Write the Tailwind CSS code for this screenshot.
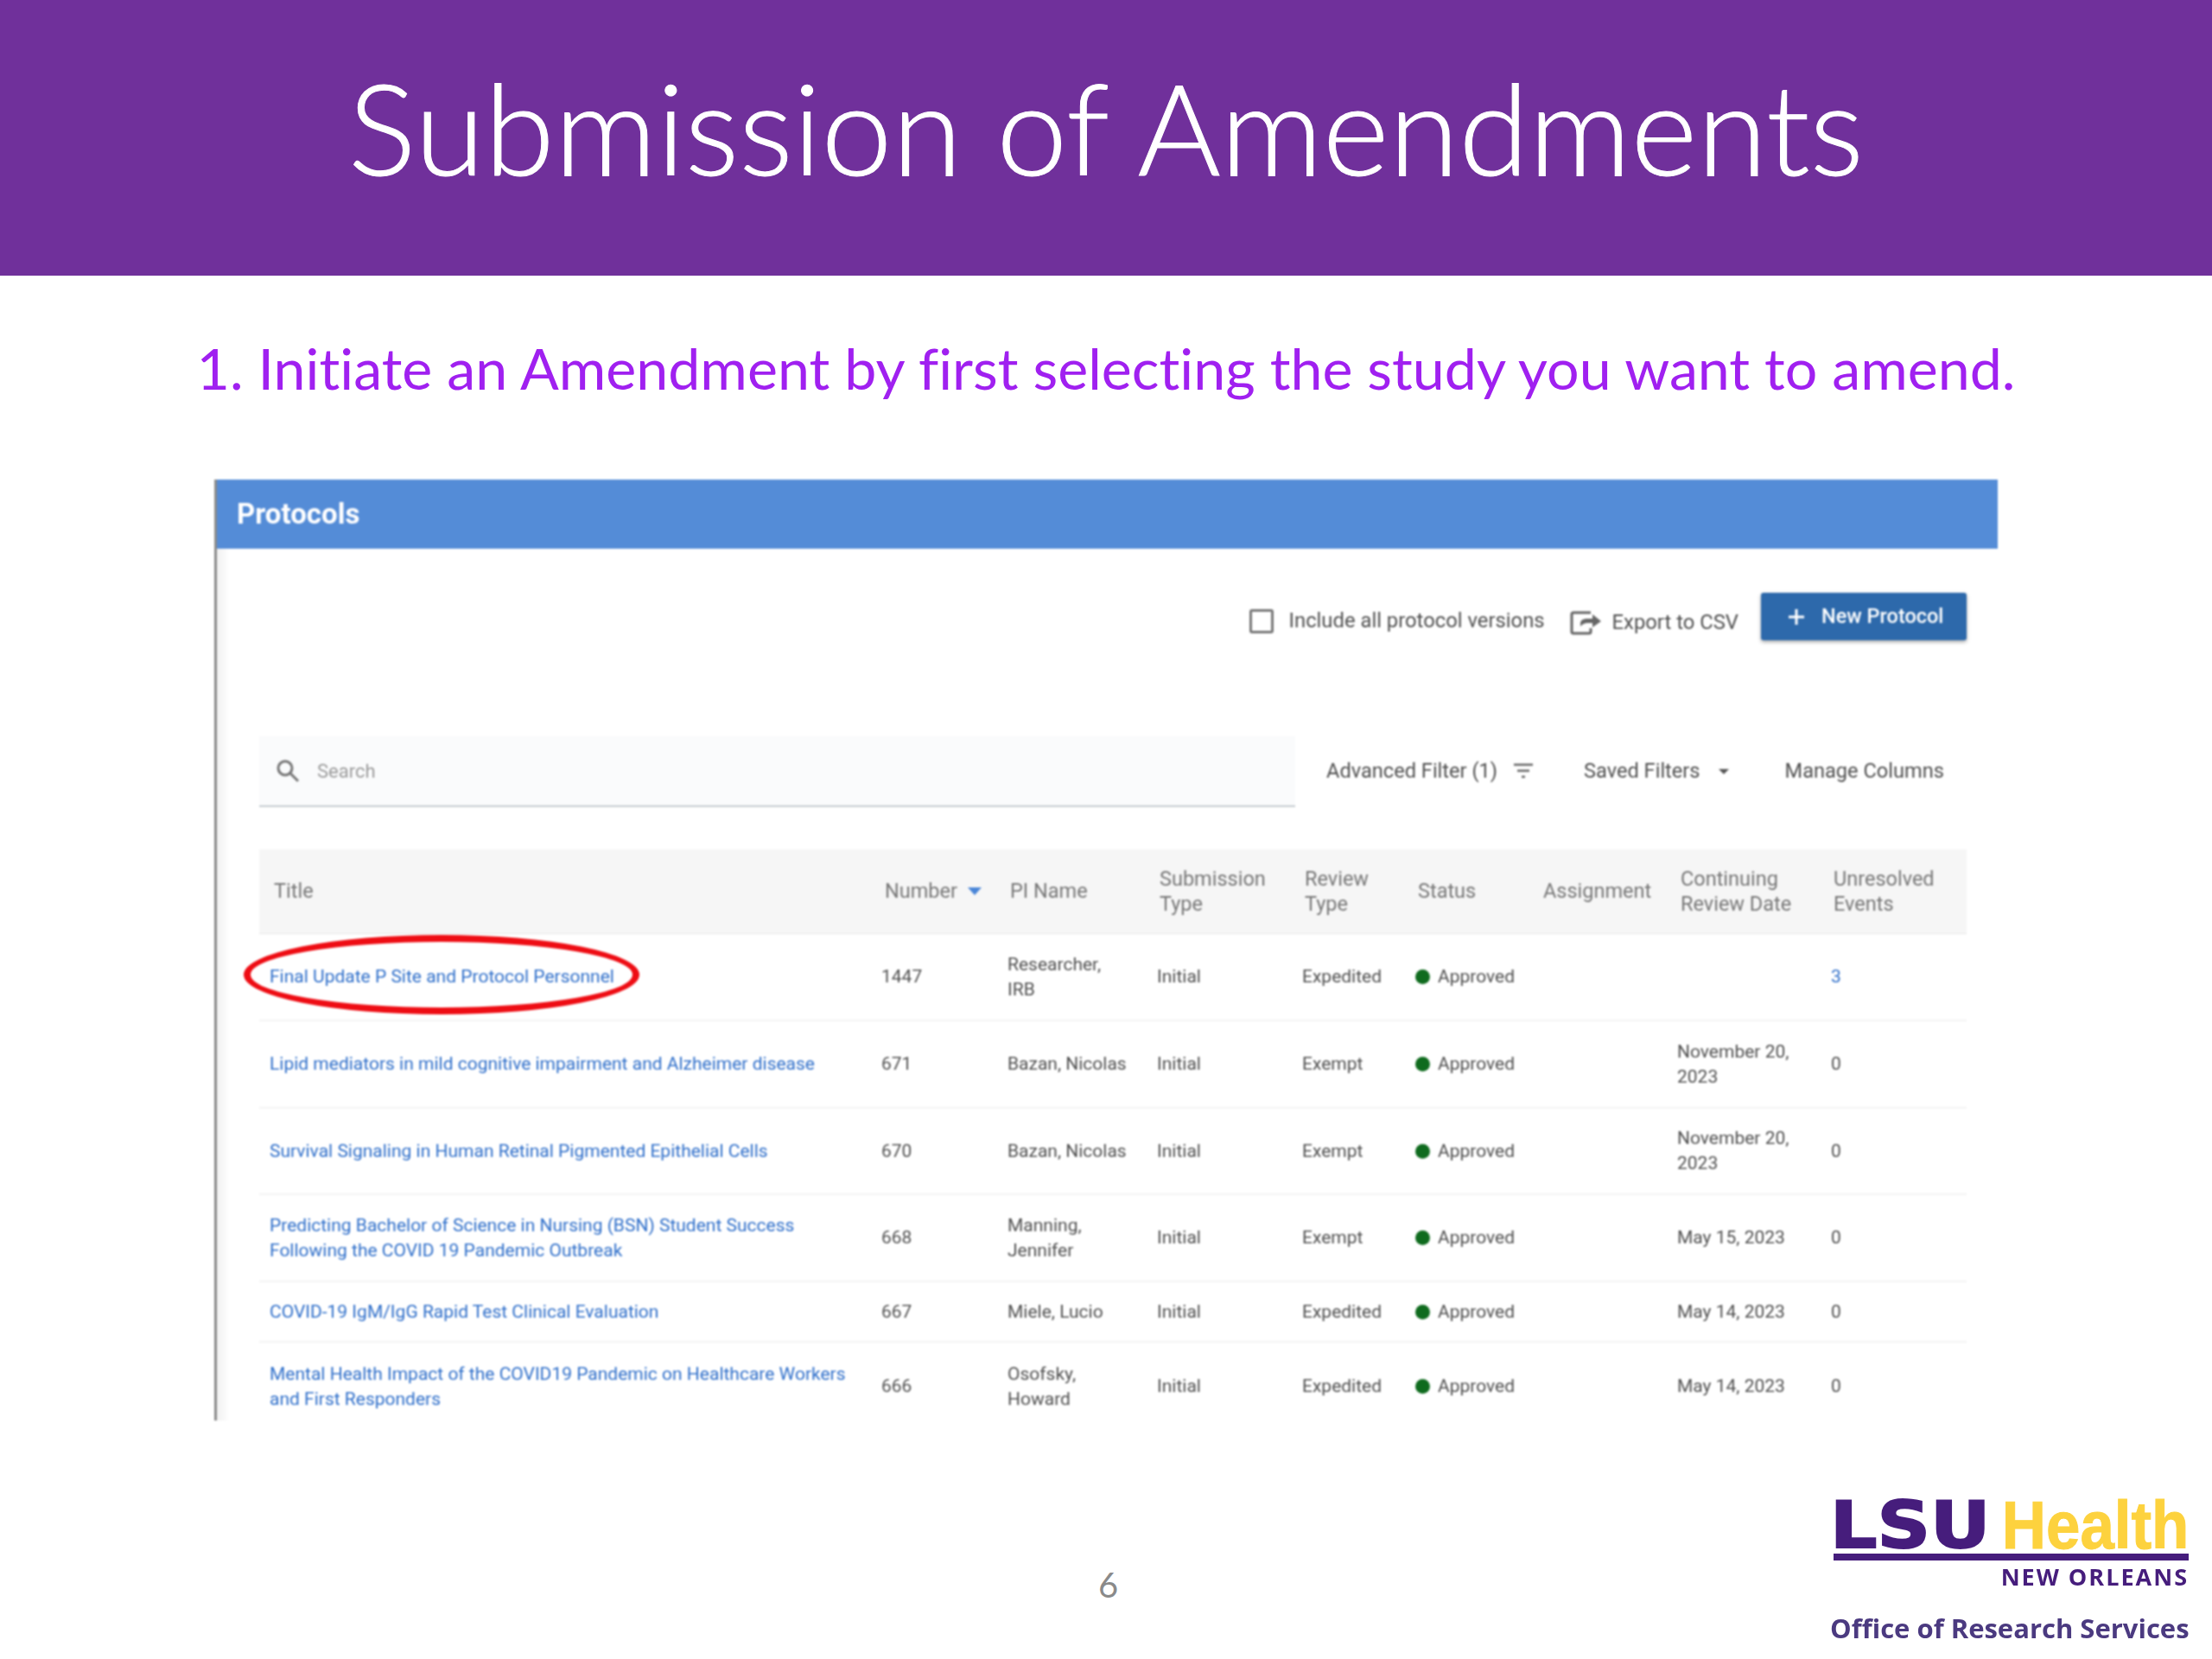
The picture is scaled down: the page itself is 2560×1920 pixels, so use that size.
<!DOCTYPE html>
<html lang="en">
<head>
    <meta charset="UTF-8">
    <title>Submission of Amendments</title>
    <script src="https://cdn.jsdelivr.net/npm/@tailwindcss/browser@4"></script>
</head>
<body class="bg-white font-['Roboto',sans-serif]">
    <div class="w-[2560px] h-[1920px] overflow-hidden flex flex-col">
        <!-- Slide title -->
        <div class="h-[319px] bg-[#70309b] flex items-center justify-center">
            <h1 class="font-['Lato',sans-serif] font-light text-[147px] leading-none text-white pb-[26px] [font-variant-ligatures:none] [-webkit-text-stroke:1px_white]">Submission of Amendments</h1>
        </div>
        <p class="font-['Lato',sans-serif] text-[66.3px] leading-none text-[#a020f0] text-center h-[236px] pt-[74px] [font-variant-ligatures:none]">1. Initiate an Amendment by first selecting the study you want to amend.</p>

        <!-- Screenshot of the protocols page -->
        <div class="relative ml-[248px] w-[2064px] h-[1089px] overflow-hidden blur-[0.8px] border-l-[3px] border-[#8a8a8a] text-[#505050]">
            <div class="h-[80px] bg-[#548cd7] flex items-center pl-[23px] text-white font-bold text-[33px]">Protocols</div>

            <div class="pl-[49px] pr-[36px] bg-gradient-to-r from-[#f1f1f1] to-white to-[14px]">
                <!-- Actions -->
                <div class="h-[217px] pt-[51px] flex justify-end items-start text-[23.8px]">
                    <div class="flex items-center h-[55px] pt-[11px]">
                        <span class="w-[28px] h-[28px] border-[3px] border-[#777] rounded-[3px]"></span>
                        <span class="ml-[18px]">Include all protocol versions</span>
                        <svg class="ml-[29px] mt-[2px]" width="40" height="30" viewBox="0 0 40 30" fill="none" stroke="#666" stroke-width="3"><path d="M24 4H4a2 2 0 0 0-2 2v20a2 2 0 0 0 2 2h18a2 2 0 0 0 2-2v-4"/><path d="M12 20v-3c0-4 3-6 8-6h6V6l10 8-10 7v-5h-6c-3 0-5 1-8 4z" fill="#666" stroke="none"/></svg>
                        <span class="ml-[9px] mt-[3px]">Export to CSV</span>
                    </div>
                    <div class="ml-[26px] w-[238px] h-[55px] bg-[#2d69ab] rounded-[3px] shadow-[0_2px_4px_rgba(0,0,0,0.35)] flex items-center pl-[31px] text-white font-medium text-[23.5px]">
                        <svg width="20" height="20" viewBox="0 0 20 20" stroke="#fff" stroke-width="3"><path d="M10 1v18M1 10h18"/></svg>
                        <span class="ml-[19px]">New Protocol</span>
                    </div>
                </div>

                <!-- Search and filters -->
                <div class="flex items-center h-[82px] text-[23.6px]">
                    <div class="w-[1199px] h-[82px] bg-[#fafbfc] border-b-2 border-[#c5ccd0] flex items-center pl-[19px] text-[#9b9b9b] text-[22px]">
                        <svg width="28" height="28" viewBox="0 0 28 28" fill="none" stroke="#777" stroke-width="3"><circle cx="11" cy="11" r="8"/><path d="M17 17l9 9"/></svg>
                        <span class="ml-[20px]">Search</span>
                    </div>
                    <span class="ml-[36px]">Advanced Filter (1)</span>
                    <svg class="ml-[18px] -mt-[2px]" width="24" height="20" viewBox="0 0 24 20" stroke="#666" stroke-width="2.5"><path d="M1 3h22M5 10h14M10 17h4"/></svg>
                    <span class="ml-[58px]">Saved Filters</span>
                    <span class="ml-[21px] w-0 h-0 border-x-[6px] border-x-transparent border-t-[6px] border-t-[#555]"></span>
                    <span class="ml-[65px]">Manage Columns</span>
                </div>

                <!-- Table -->
                <div class="mt-[49px] text-[21px] leading-[29px]">
                    <div class="grid grid-cols-[720px_146px_173px_168px_131px_145px_158px_178px_157px] items-center h-[98px] bg-[#f6f6f6] border-b border-[#e6e6e6] text-[23.5px] text-[#777] leading-[29px]">
                        <div class="pl-[17px]">Title</div>
                        <div class="pl-[4px] flex items-center">Number<span class="ml-[12px] w-0 h-0 border-x-[8px] border-x-transparent border-t-[9px] border-t-[#4a86d8]"></span></div>
                        <div class="pl-[3px]">PI Name</div>
                        <div class="pl-[3px]">Submission<br>Type</div>
                        <div class="pl-[3px]">Review<br>Type</div>
                        <div class="pl-[3px]">Status</div>
                        <div class="pl-[3px]">Assignment</div>
                        <div class="pl-[4px]">Continuing<br>Review Date</div>
                        <div class="pl-[3px]">Unresolved<br>Events</div>
                    </div>

                    <div class="grid grid-cols-[720px_146px_173px_168px_131px_145px_158px_178px_157px] items-center h-[101px] border-b-2 border-[#f3f3f3]">
                        <div class="pl-[12px] text-[#2f6fca]">Final Update P Site and Protocol Personnel</div>
                        <div>1447</div>
                        <div>Researcher,<br>IRB</div>
                        <div>Initial</div>
                        <div>Expedited</div>
                        <div class="flex items-center"><span class="w-[17px] h-[17px] rounded-full bg-[#0f6b1e] mr-[9px]"></span>Approved</div>
                        <div></div>
                        <div></div>
                        <div class="text-[#2f6fca]">3</div>
                    </div>
                    <div class="grid grid-cols-[720px_146px_173px_168px_131px_145px_158px_178px_157px] items-center h-[101px] border-b-2 border-[#f3f3f3]">
                        <div class="pl-[12px] text-[#2f6fca]">Lipid mediators in mild cognitive impairment and Alzheimer disease</div>
                        <div>671</div>
                        <div>Bazan, Nicolas</div>
                        <div>Initial</div>
                        <div>Exempt</div>
                        <div class="flex items-center"><span class="w-[17px] h-[17px] rounded-full bg-[#0f6b1e] mr-[9px]"></span>Approved</div>
                        <div></div>
                        <div>November 20,<br>2023</div>
                        <div>0</div>
                    </div>
                    <div class="grid grid-cols-[720px_146px_173px_168px_131px_145px_158px_178px_157px] items-center h-[100px] border-b-2 border-[#f3f3f3]">
                        <div class="pl-[12px] text-[#2f6fca]">Survival Signaling in Human Retinal Pigmented Epithelial Cells</div>
                        <div>670</div>
                        <div>Bazan, Nicolas</div>
                        <div>Initial</div>
                        <div>Exempt</div>
                        <div class="flex items-center"><span class="w-[17px] h-[17px] rounded-full bg-[#0f6b1e] mr-[9px]"></span>Approved</div>
                        <div></div>
                        <div>November 20,<br>2023</div>
                        <div>0</div>
                    </div>
                    <div class="grid grid-cols-[720px_146px_173px_168px_131px_145px_158px_178px_157px] items-center h-[101px] border-b-2 border-[#f3f3f3]">
                        <div class="pl-[12px] text-[#2f6fca]">Predicting Bachelor of Science in Nursing (BSN) Student Success<br>Following the COVID 19 Pandemic Outbreak</div>
                        <div>668</div>
                        <div>Manning,<br>Jennifer</div>
                        <div>Initial</div>
                        <div>Exempt</div>
                        <div class="flex items-center"><span class="w-[17px] h-[17px] rounded-full bg-[#0f6b1e] mr-[9px]"></span>Approved</div>
                        <div></div>
                        <div>May 15, 2023</div>
                        <div>0</div>
                    </div>
                    <div class="grid grid-cols-[720px_146px_173px_168px_131px_145px_158px_178px_157px] items-center h-[70px] border-b-2 border-[#f3f3f3]">
                        <div class="pl-[12px] text-[#2f6fca]">COVID-19 IgM/IgG Rapid Test Clinical Evaluation</div>
                        <div>667</div>
                        <div>Miele, Lucio</div>
                        <div>Initial</div>
                        <div>Expedited</div>
                        <div class="flex items-center"><span class="w-[17px] h-[17px] rounded-full bg-[#0f6b1e] mr-[9px]"></span>Approved</div>
                        <div></div>
                        <div>May 14, 2023</div>
                        <div>0</div>
                    </div>
                    <div class="grid grid-cols-[720px_146px_173px_168px_131px_145px_158px_178px_157px] items-center h-[101px]">
                        <div class="pl-[12px] text-[#2f6fca]">Mental Health Impact of the COVID19 Pandemic on Healthcare Workers<br>and First Responders</div>
                        <div>666</div>
                        <div>Osofsky,<br>Howard</div>
                        <div>Initial</div>
                        <div>Expedited</div>
                        <div class="flex items-center"><span class="w-[17px] h-[17px] rounded-full bg-[#0f6b1e] mr-[9px]"></span>Approved</div>
                        <div></div>
                        <div>May 14, 2023</div>
                        <div>0</div>
                    </div>
                </div>
            </div>

            <!-- Red annotation -->
            <span class="absolute left-[31px] top-[527px] w-[458px] h-[92px] rounded-[50%] border-[8px] border-[#ee0d14]"></span>
        </div>

        <!-- Footer -->
        <div class="flex-1 flex items-start">
            <span class="ml-[1271px] mt-[170px] font-['Lato',sans-serif] text-[40px] leading-none text-[#8a8a8a]">6</span>
            <div class="ml-auto mr-[27px] mt-[91px] w-[415px] blur-[0.6px]">
                <div class="flex items-end justify-between h-[60px]">
                    <span class="font-['DejaVu_Sans',sans-serif] font-bold text-[75px] leading-[60px] text-[#461d7c] origin-left scale-x-[1.14] [-webkit-text-stroke:2px_#461d7c]">LSU</span>
                    <span class="font-['Liberation_Sans',sans-serif] font-bold text-[77px] leading-[60px] text-[#fdd23e] origin-right scale-x-[0.92] [-webkit-text-stroke:1px_#fdd23e]">Health</span>
                </div>
                <div class="h-[8px] mt-[3px] ml-[4px] bg-[#461d7c]"></div>
                <div class="text-right font-['Open_Sans',sans-serif] font-bold text-[27px] leading-[30px] tracking-[2px] text-[#461d7c] mt-[4px]">NEW ORLEANS</div>
                <div class="text-right font-['Open_Sans',sans-serif] font-bold text-[31px] leading-[36px] whitespace-nowrap text-[#4b3a80] mt-[26px]">Office of Research Services</div>
            </div>
        </div>
    </div>
</body>
</html>
